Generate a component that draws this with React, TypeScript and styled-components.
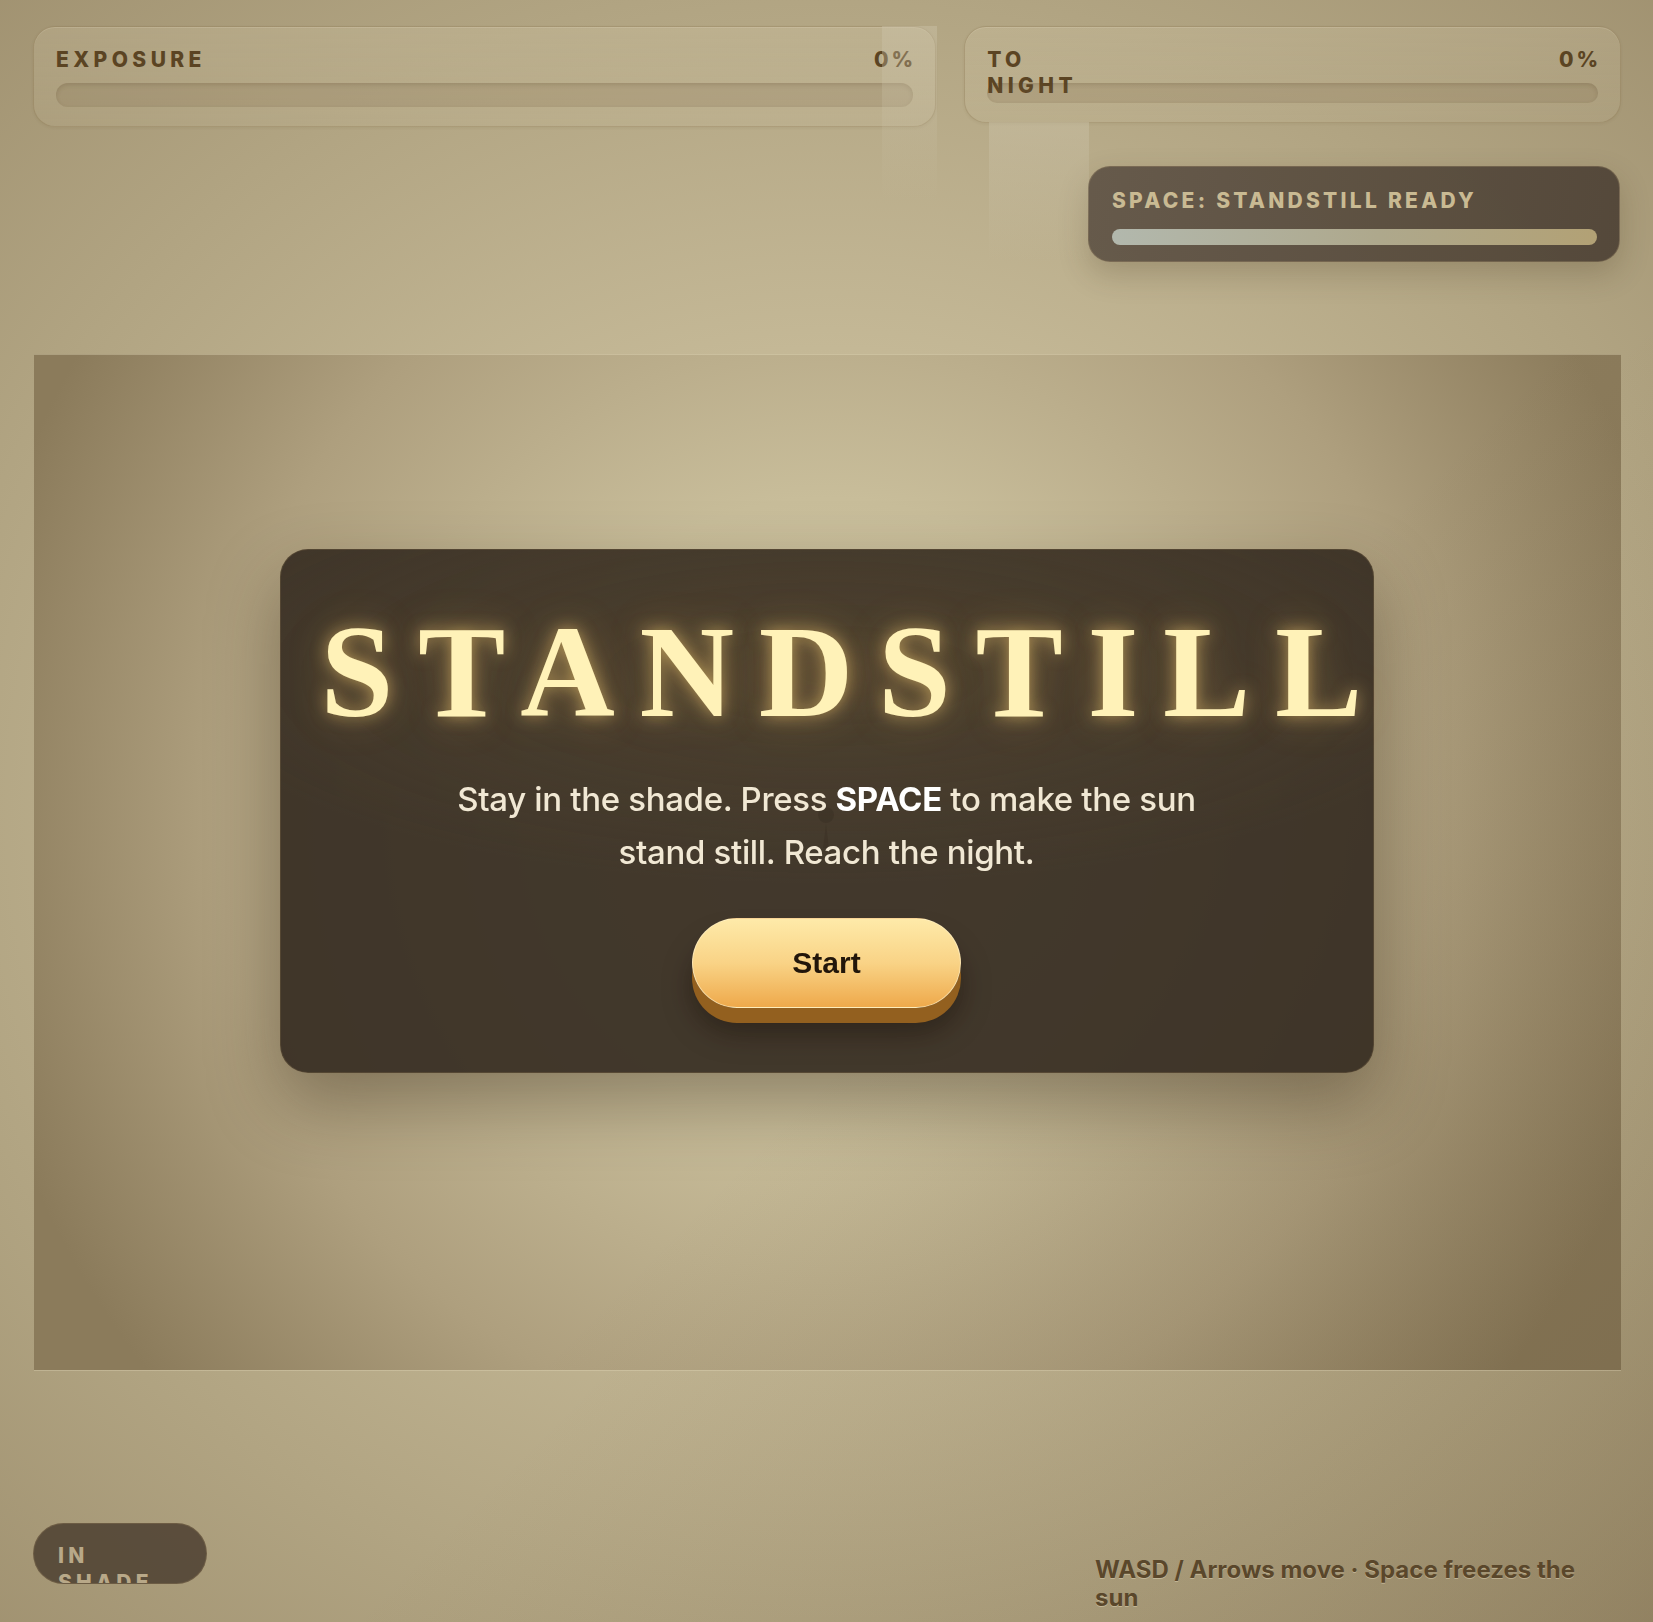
import React from 'react'
import styled, { createGlobalStyle } from 'styled-components'

const GlobalStyle = createGlobalStyle`
  html, body {
    margin: 0;
    padding: 0;
  }
  body {
    width: 1653px;
    height: 1622px;
    overflow: hidden;
    font-family: Inter, "Noto Sans", sans-serif;
    background: #b4a685;
  }
`

const Page = styled.div`
  position: relative;
  box-sizing: border-box;
  height: 1622px;
  padding: 26px 32px 0 33px;
  display: flex;
  flex-direction: column;
  background:
    linear-gradient(135deg, rgba(90, 70, 40, 0) 60%, rgba(90, 70, 40, 0.22) 100%),
    radial-gradient(ellipse 80% 75% at 50% 50%, #d2c8a6 0%, #c6ba98 35%, #b1a482 68%, #9c8d6c 100%);
`

const HudRow = styled.div`
  display: grid;
  grid-template-columns: 1.375fr 1fr;
  gap: 28px;
  align-items: start;
`

const MeterCard = styled.div`
  box-sizing: border-box;
  padding: 20px 22px 19px 22px;
  border-radius: 22px;
  border: 1px solid rgba(115, 92, 55, 0.26);
  background: linear-gradient(180deg, rgba(238, 228, 198, 0.16), rgba(238, 228, 198, 0.08));
  box-shadow: inset 0 1px 0 rgba(255, 250, 230, 0.14), 0 1px 3px rgba(80, 60, 30, 0.08);
  display: flex;
  flex-direction: column;
  gap: 10px;
`

const MeterHead = styled.div`
  height: 26px;
  display: flex;
  justify-content: space-between;
  align-items: flex-start;
`

const MeterLabel = styled.span`
  width: min-content;
  font: 800 21px/26px Inter, "Noto Sans", sans-serif;
  letter-spacing: 0.21em;
  color: #5b4423;
  text-transform: uppercase;
`

const MeterValue = styled.span`
  font: 800 21px/26px Inter, "Noto Sans", sans-serif;
  letter-spacing: 0.14em;
  margin-right: -3px;
  color: #5b4423;
`

const Track = styled.div<{ $h: number }>`
  height: ${p => p.$h}px;
  border-radius: 999px;
  background: rgba(112, 90, 55, 0.16);
  box-shadow: inset 0 2px 4px rgba(70, 50, 25, 0.16);
  overflow: hidden;
`

const ChargeCard = styled.div`
  align-self: flex-end;
  box-sizing: border-box;
  width: 532px;
  margin-top: 39px;
  margin-right: 1px;
  padding: 21px 22px 16px 23px;
  border-radius: 22px;
  border: 1px solid rgba(160, 140, 105, 0.35);
  background: linear-gradient(100deg, rgba(96, 84, 70, 0.93), rgba(78, 66, 53, 0.93));
  box-shadow: 0 12px 30px rgba(60, 45, 25, 0.22);
  display: flex;
  flex-direction: column;
  gap: 15px;
`

const ChargeLabel = styled.span`
  font: 800 21px/26px Inter, "Noto Sans", sans-serif;
  letter-spacing: 0.155em;
  color: #c9ba93;
`

const ChargeBar = styled.div`
  height: 16px;
  border-radius: 999px;
  background: linear-gradient(90deg, #b2b8ad 0%, #aea88c 55%, #b2a175 100%);
`

const Glare = styled.div<{ $x: number; $y: number; $w: number; $h: number }>`
  position: absolute;
  left: ${p => p.$x}px;
  top: ${p => p.$y}px;
  width: ${p => p.$w}px;
  height: ${p => p.$h}px;
  background: linear-gradient(180deg, rgba(205, 196, 170, 0.42), rgba(205, 196, 170, 0.18) 60%, rgba(205, 196, 170, 0));
  pointer-events: none;
`

const Stage = styled.div`
  position: relative;
  margin-top: 92px;
  margin-left: 1px;
  height: 1016px;
  background:
    linear-gradient(135deg, rgba(80, 62, 35, 0) 58%, rgba(80, 62, 35, 0.2) 100%),
    radial-gradient(ellipse 55% 88% at 50% 45%, #d3c9a8 0%, #c8bd9a 35%, #ae9f7e 70%, #8b7b5b 100%);
  box-shadow: inset 0 1px 0 rgba(235, 225, 195, 0.35), 0 1px 0 rgba(235, 225, 195, 0.3);
`

const Sprite = styled.svg`
  position: absolute;
  left: 780px;
  top: 452px;
  width: 24px;
  height: 44px;
`

const Footer = styled.div`
  margin-top: 153px;
  display: flex;
  justify-content: space-between;
  align-items: flex-start;
`

const StatusPill = styled.div`
  box-sizing: border-box;
  width: 174px;
  height: 61px;
  padding: 18px 24px 0;
  border-radius: 999px;
  border: 1px solid rgba(130, 110, 80, 0.45);
  background: rgba(84, 70, 54, 0.92);
  overflow: hidden;
`

const StatusText = styled.span`
  display: block;
  width: min-content;
  font: 800 21px/27px Inter, "Noto Sans", sans-serif;
  letter-spacing: 0.2em;
  color: #b8a888;
`

const Hint = styled.div`
  box-sizing: border-box;
  width: 500px;
  margin: 33px 26px 0 0;
  font: 700 24px/28px Inter, "Noto Sans", sans-serif;
  color: #5a472b;
  text-shadow: 0 1px 0 rgba(232, 222, 192, 0.45);
`

const Overlay = styled.div`
  position: fixed;
  inset: 0;
  display: flex;
  align-items: center;
  justify-content: center;
`

const Card = styled.div`
  box-sizing: border-box;
  width: 1094px;
  padding: 56px 40px 64px;
  border-radius: 28px;
  border: 1px solid rgba(120, 100, 70, 0.35);
  background:
    radial-gradient(ellipse 60% 40% at 50% 24%, rgba(84, 70, 47, 0.55), rgba(84, 70, 47, 0) 100%),
    rgba(55, 45, 34, 0.93);
  box-shadow: 0 30px 70px rgba(45, 32, 15, 0.38);
  text-align: center;
`

const Title = styled.h1`
  margin: 0;
  text-align: left;
  white-space: nowrap;
  font: 700 131px/1 "Liberation Serif", "Times New Roman", serif;
  letter-spacing: 0.188em;
  color: #fff2b8;
  text-shadow: 0 0 16px rgba(255, 214, 120, 0.55), 0 0 40px rgba(255, 200, 100, 0.25);
`

const Blurb = styled.p`
  margin: 36px auto 39px;
  max-width: 800px;
  font: 500 33px/53px Inter, "Noto Sans", sans-serif;
  letter-spacing: -0.01em;
  color: #f1e8d4;

  b {
    font-weight: 700;
    color: #ffffff;
  }
`

const StartButton = styled.button`
  width: 269px;
  height: 90px;
  border: 1px solid rgba(255, 240, 200, 0.6);
  border-radius: 999px;
  background: linear-gradient(180deg, #feeaa9 0%, #f9d386 50%, #eea94b 100%);
  box-shadow: 0 15px 0 #93601f, 0 24px 30px rgba(20, 12, 4, 0.45);
  font: 700 30px "Liberation Sans", Arial, sans-serif;
  color: #22160a;
  cursor: pointer;
`

function Meter({ label, value, barHeight }: { label: string; value: number; barHeight: number }) {
  return (
    <MeterCard>
      <MeterHead>
        <MeterLabel>{label}</MeterLabel>
        <MeterValue>{value}%</MeterValue>
      </MeterHead>
      <Track $h={barHeight} />
    </MeterCard>
  )
}

export default function App() {
  return (
    <>
      <GlobalStyle />
      <Page>
        <HudRow>
          <Meter label="Exposure" value={0} barHeight={24} />
          <Meter label="To Night" value={0} barHeight={20} />
        </HudRow>

        <ChargeCard>
          <ChargeLabel>SPACE: STANDSTILL READY</ChargeLabel>
          <ChargeBar />
        </ChargeCard>

        <Stage>
          {/* the wanderer, standing in the middle of the field */}
          <Sprite viewBox="0 0 24 44">
            <circle cx="12" cy="9" r="8" fill="rgba(28, 20, 10, 0.55)" />
            <path d="M12 17 L9 42 L15 42 Z" fill="rgba(28, 20, 10, 0.45)" />
          </Sprite>
        </Stage>

        <Footer>
          <StatusPill>
            <StatusText>IN SHADE</StatusText>
          </StatusPill>
          <Hint>WASD / Arrows move · Space freezes the sun</Hint>
        </Footer>

        <Glare $x={882} $y={26} $w={55} $h={175} />
        <Glare $x={989} $y={122} $w={100} $h={140} />
      </Page>

      <Overlay>
        <Card>
          <Title>STANDSTILL</Title>
          <Blurb>
            Stay in the shade. Press <b>SPACE</b> to make the sun stand still. Reach the night.
          </Blurb>
          <StartButton>Start</StartButton>
        </Card>
      </Overlay>
    </>
  )
}
